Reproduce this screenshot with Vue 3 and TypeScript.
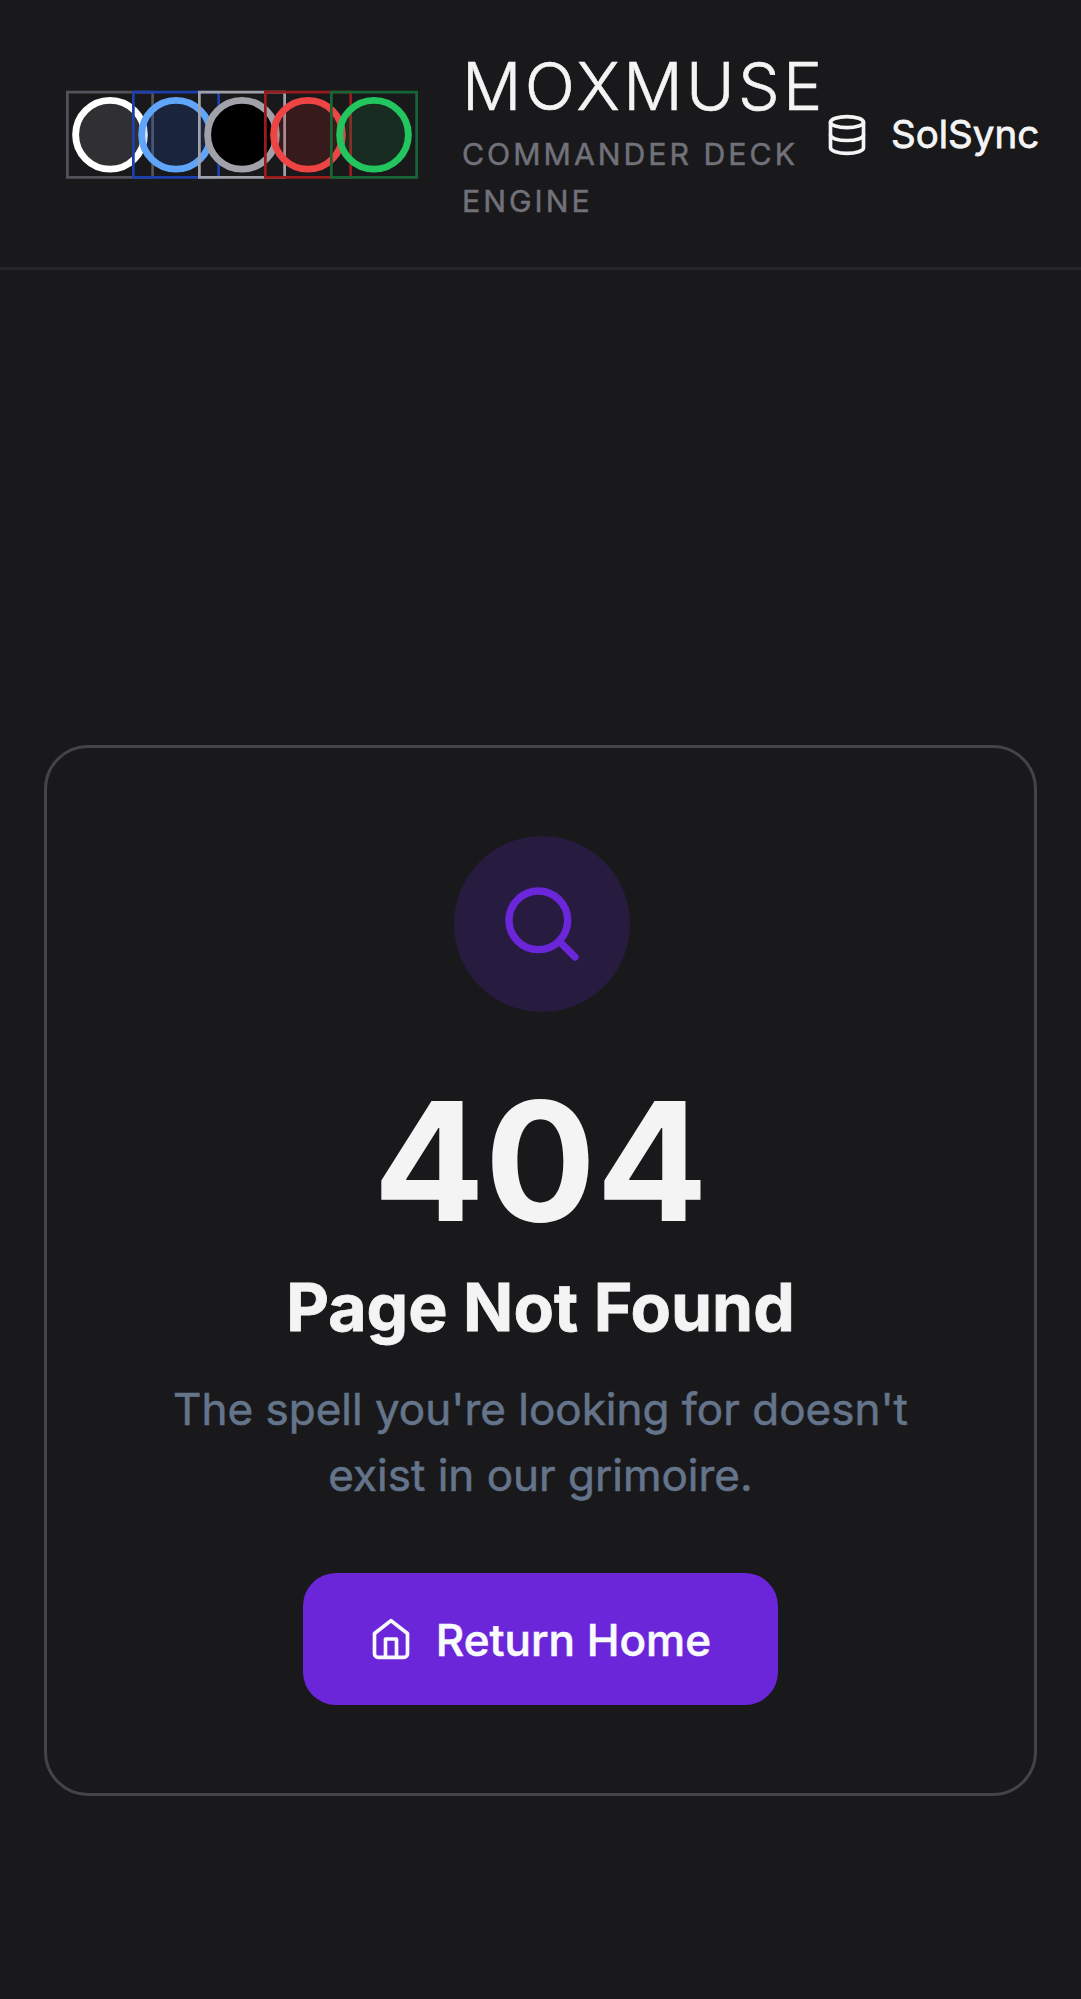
<script setup lang="ts">
interface Mana {
  name: string
  border: string
  stroke: string
  fill: string
  fillOpacity: number
}

const manas: Mana[] = [
  { name: 'white', border: '#52525b', stroke: '#ffffff', fill: '#ffffff', fillOpacity: 0.1 },
  { name: 'blue', border: '#1e40af', stroke: '#60a5fa', fill: '#2563eb', fillOpacity: 0.16 },
  { name: 'black', border: '#a1a1aa', stroke: '#a1a1aa', fill: '#000000', fillOpacity: 1 },
  { name: 'red', border: '#991b1b', stroke: '#ef4444', fill: '#dc2626', fillOpacity: 0.16 },
  { name: 'green', border: '#166534', stroke: '#22c55e', fill: '#16a34a', fillOpacity: 0.14 },
]
</script>

<template>
  <div class="page">
    <header class="header">
      <div class="brand">
        <div class="manas">
          <svg v-for="m in manas" :key="m.name" class="mana" viewBox="0 0 88 89" fill="none">
            <rect x="1.375" y="2.125" width="85.25" height="85.25" :stroke="m.border" stroke-width="2.75" />
            <circle
              cx="44"
              cy="44.75"
              r="34.375"
              :fill="m.fill"
              :fill-opacity="m.fillOpacity"
              :stroke="m.stroke"
              stroke-width="6.875"
            />
          </svg>
        </div>
        <div class="titles">
          <div class="title">MOXMUSE</div>
          <div class="subtitle">COMMANDER DECK<br />ENGINE</div>
        </div>
      </div>
      <a class="sync">
        <svg class="icon" viewBox="0 0 24 24">
          <ellipse cx="12" cy="5" rx="9" ry="3" />
          <path d="M3 5V19A9 3 0 0 0 21 19V5" />
          <path d="M3 12A9 3 0 0 0 21 12" />
        </svg>
        <span>SolSync</span>
      </a>
    </header>
    <main class="main">
      <section class="card">
        <div class="badge">
          <svg class="search" viewBox="0 0 24 24">
            <circle cx="11" cy="11" r="8" />
            <path d="m21 21-4.3-4.3" />
          </svg>
        </div>
        <h1 class="code">404</h1>
        <h2 class="heading">Page Not Found</h2>
        <p class="text">The spell you're looking for doesn't<br />exist in our grimoire.</p>
        <a class="button">
          <svg class="icon" viewBox="0 0 24 24">
            <path d="m3 9 9-7 9 7v11a2 2 0 0 1-2 2H5a2 2 0 0 1-2-2z" />
            <polyline points="9 22 9 12 15 12 15 22" />
          </svg>
          <span>Return Home</span>
        </a>
      </section>
    </main>
  </div>
</template>

<style>
body {
  margin: 0;
  background: #19191b;
}
</style>

<style scoped>
.page {
  height: 1999px;
  overflow: hidden;
  background: #19191b;
  color: #f4f4f5;
  font-family: Inter, "Liberation Sans", sans-serif;
  display: flex;
  flex-direction: column;
}
.header {
  box-sizing: border-box;
  height: 270px;
  flex: none;
  display: flex;
  align-items: flex-start;
  justify-content: space-between;
  padding: 0 42px 0 66px;
  border-bottom: 3px solid #262629;
}
.brand {
  display: flex;
  gap: 44px;
  width: 759px;
}
.manas {
  display: flex;
  padding-top: 90px;
}
.mana {
  display: block;
  width: 88px;
  height: 89px;
  flex: none;
}
.mana + .mana {
  margin-left: -22px;
}
.titles {
  padding-top: 42px;
  white-space: nowrap;
}
.title {
  font-size: 66px;
  line-height: 88px;
  font-weight: 300;
  letter-spacing: 3.3px;
  -webkit-text-stroke: 0.6px currentColor;
}
.subtitle {
  margin-top: 1px;
  font-size: 30.25px;
  line-height: 47px;
  letter-spacing: 3px;
  color: #71717a;
  -webkit-text-stroke: 0.5px currentColor;
}
.sync {
  display: flex;
  align-items: center;
  gap: 22px;
  width: 214px;
  height: 55px;
  margin-top: 107px;
  font-size: 38.5px;
  font-weight: 400;
  white-space: nowrap;
}
.sync span {
  -webkit-text-stroke: 0.8px currentColor;
  padding-bottom: 1px;
}
.icon {
  width: 44px;
  height: 44px;
  flex: none;
  fill: none;
  stroke: currentColor;
  stroke-width: 2;
  stroke-linecap: round;
  stroke-linejoin: round;
}
.main {
  padding: 475px 44px 0;
}
.card {
  box-sizing: border-box;
  height: 1051px;
  border: 3px solid #444446;
  border-radius: 44px;
  padding-top: 88px;
  display: flex;
  flex-direction: column;
  align-items: center;
}
.badge {
  width: 176px;
  height: 176px;
  flex: none;
  border-radius: 50%;
  background: #281b40;
  display: flex;
  align-items: center;
  justify-content: center;
  margin-left: 2px;
}
.search {
  width: 88px;
  height: 88px;
  fill: none;
  stroke: #6b26d9;
  stroke-width: 2;
  stroke-linecap: round;
}
.code {
  margin: 67px 0 0;
  font-size: 165px;
  line-height: 165px;
  font-weight: 700;
}
.heading {
  margin: 19px 0 0;
  font-size: 66px;
  line-height: 88px;
  font-weight: 700;
  -webkit-text-stroke: 0.8px currentColor;
}
.text {
  margin: 25px 0 0;
  font-size: 44px;
  line-height: 66px;
  text-align: center;
  white-space: nowrap;
  color: #64748b;
  -webkit-text-stroke: 0.6px currentColor;
}
.button {
  margin: 65px 0 0;
  box-sizing: border-box;
  width: 475.5px;
  height: 132px;
  border-radius: 33px;
  background: #6b26d9;
  color: #f8fafc;
  display: flex;
  align-items: center;
  padding-left: 66px;
  gap: 23px;
  font-size: 44px;
  font-weight: 500;
  white-space: nowrap;
}
.button span {
  padding-top: 2px;
  -webkit-text-stroke: 0.6px currentColor;
}
</style>
